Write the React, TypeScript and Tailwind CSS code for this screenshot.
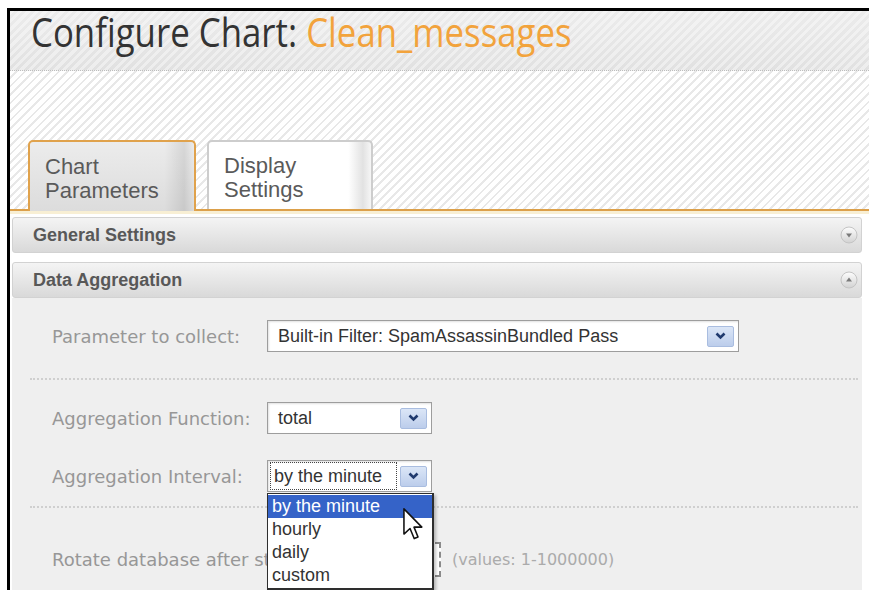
import React from "react";

const sans = { fontFamily: '"Liberation Sans", Arial, sans-serif' };
const verdana = { fontFamily: '"DejaVu Sans", Verdana, sans-serif' };

function Chevron() {
  return (
    <svg width="11" height="8" viewBox="0 0 11 8">
      <polyline points="1.5,1.5 5.5,5.5 9.5,1.5" fill="none" stroke="#203a6e" strokeWidth="2.6" />
    </svg>
  );
}

function ArrowButton() {
  return (
    <div className="flex h-[21px] w-[27px] items-center justify-center rounded-[2px] border border-[#a9bde0] [background-image:linear-gradient(#dbe6f7,#bccdeb)]">
      <Chevron />
    </div>
  );
}

function SelectBox({ value, width, focused }: { value: string; width: string; focused?: boolean }) {
  return (
    <div
      className={`flex h-[32px] items-center justify-between border border-[#9d9d9d] bg-white pl-[2px] pr-[4px] shadow-[inset_1px_1px_2px_rgba(0,0,0,0.12)] ${width}`}
      style={sans}
    >
      {focused ? (
        <span className="flex h-[28px] w-[127px] items-center border border-dotted border-[#444] pl-[3px] text-[18px] text-[#333]">
          {value}
        </span>
      ) : (
        <span className="pl-[8px] text-[18px] text-[#333]">{value}</span>
      )}
      <ArrowButton />
    </div>
  );
}

function ToggleDot({ up }: { up?: boolean }) {
  return (
    <svg width="18" height="18" viewBox="0 0 18 18">
      <defs>
        <linearGradient id={up ? "dotUp" : "dotDown"} x1="0" y1="0" x2="0" y2="1">
          <stop offset="0" stopColor="#fdfdfd" />
          <stop offset="1" stopColor="#d2d2d2" />
        </linearGradient>
      </defs>
      <circle cx="9" cy="9" r="8" fill={`url(#${up ? "dotUp" : "dotDown"})`} stroke="#c4c4c4" />
      {up ? <path d="M6 10.5 L9 6.5 L12 10.5 Z" fill="#7a7a7a" /> : <path d="M6 7.5 L9 11.5 L12 7.5 Z" fill="#7a7a7a" />}
    </svg>
  );
}

function SectionBar({ title, open }: { title: string; open?: boolean }) {
  return (
    <div className="flex h-[36px] items-center justify-between rounded-[3px] border border-[#d2d2d2] pl-[20px] pr-[3px] [background-image:linear-gradient(#f4f4f4,#d9d9d9)]">
      <span className="text-[18px] font-bold text-[#585858]" style={sans}>
        {title}
      </span>
      <ToggleDot up={open} />
    </div>
  );
}

// mouse pointer hovering the first option
function Cursor() {
  return (
    <svg width="21" height="33" viewBox="0 0 12 19" className="absolute left-[136px] top-[48px]">
      <path d="M0.5 0.5 L0.5 15 L4 11.8 L6.4 17.6 L8.6 16.7 L6.3 11 L10.8 11 Z" fill="#fff" stroke="#111" strokeWidth="0.9" strokeLinejoin="round" />
    </svg>
  );
}

const intervals = ["by the minute", "hourly", "daily", "custom"];

export default function App() {
  return (
    <div className="h-[590px] w-[869px] overflow-hidden bg-white pl-[7px] pt-[8px]">
      <div className="h-[600px] border-l-[3px] border-t-[3px] border-black">
        <header className="h-[60px] border-b border-dotted border-[#bdbdbd] pl-[21px] pt-[1px] [background-image:repeating-linear-gradient(135deg,rgba(255,255,255,0.4)_0px,rgba(255,255,255,0.4)_3px,transparent_3px,transparent_6px),linear-gradient(#ececec,#e1e1e1)]">
          <h1
            className="inline-block origin-left scale-x-[0.87] whitespace-nowrap text-[40px] leading-[40px] text-[#333]"
            style={{ fontFamily: '"Open Sans", "Noto Sans", sans-serif' }}
          >
            Configure Chart: <span className="text-[#f2a33c]">Clean_messages</span>
          </h1>
        </header>

        <div className="flex h-[140px] items-end gap-[11px] border-b-2 border-[#dca04a] pl-[18px] [background-image:repeating-linear-gradient(135deg,#ffffff_0px,#ffffff_4px,#e8e8e8_4px,#e8e8e8_6px)]">
          <div
            className="-mb-[2px] h-[71px] w-[168px] rounded-t-[5px] border-2 border-b-0 border-[#e0a24c] pl-[15px] pt-[13px] text-[22px] leading-[24px] text-[#5a5a5a] [background-image:linear-gradient(90deg,transparent_82%,rgba(0,0,0,0.09)_94%,transparent),linear-gradient(#ececec,#dcdcdc)]"
            style={sans}
          >
            Chart
            <br />
            Parameters
          </div>
          <div
            className="h-[69px] w-[166px] rounded-t-[5px] border-2 border-b-0 border-[#cdcdcd] pl-[15px] pt-[12px] text-[22px] leading-[24px] text-[#5a5a5a] [background-image:linear-gradient(90deg,#ffffff_86%,#e2e2e2_95%,#f6f6f6)]"
            style={sans}
          >
            Display
            <br />
            Settings
          </div>
        </div>
        <div className="h-[3px] bg-[#f8efd4]" />

        <div className="ml-[2px] mr-[7px] mt-[3px]">
          <SectionBar title="General Settings" />
          <div className="mt-[9px]">
            <SectionBar title="Data Aggregation" open />
          </div>

          <div className="h-[300px] bg-[#efefef] pl-[40px] pr-[4px] pt-[22px]" style={verdana}>
            <div className="flex items-center">
              <span className="w-[215px] text-[18px] text-[#979797]">Parameter to collect:</span>
              <SelectBox value="Built-in Filter: SpamAssassinBundled Pass" width="w-[472px]" />
            </div>

            <div className="-ml-[22px] mt-[26px] border-t-2 border-dotted border-[#cfcfcf]" />

            <div className="mt-[22px] flex items-center">
              <span className="w-[215px] text-[18px] text-[#979797]">Aggregation Function:</span>
              <SelectBox value="total" width="w-[165px]" />
            </div>

            <div className="mt-[26px] flex items-center">
              <span className="w-[215px] text-[18px] text-[#979797]">Aggregation Interval:</span>
              <div className="relative z-10">
                <SelectBox value="by the minute" width="w-[165px]" focused />
                <ul
                  className="absolute left-0 top-[33px] w-[167px] border border-r-2 border-b-2 border-[#2e2e2e] bg-white py-[1px] text-[18px] shadow-[2px_2px_3px_rgba(0,0,0,0.25)]"
                  style={sans}
                >
                  {intervals.map((item, i) => (
                    <li
                      key={item}
                      className={`h-[23px] pl-[4px] leading-[22px] ${i === 0 ? "bg-[#3563c8] text-white" : "text-[#333]"}`}
                    >
                      {item}
                    </li>
                  ))}
                </ul>
                <Cursor />
              </div>
            </div>

            <div className="-ml-[22px] mt-[14px] border-t-2 border-dotted border-[#cfcfcf]" />

            <div className="mt-[34px] flex items-center">
              <span className="w-[215px] overflow-hidden whitespace-nowrap text-[18px] text-[#979797]">Rotate database after storing</span>
              <div className="h-[35px] w-[174px] border-2 border-dashed border-[#8a8a8a] bg-white" />
              <span className="ml-[11px] text-[16px] text-[#ababab]">(values: 1-1000000)</span>
            </div>
          </div>
        </div>
      </div>
    </div>
  );
}
